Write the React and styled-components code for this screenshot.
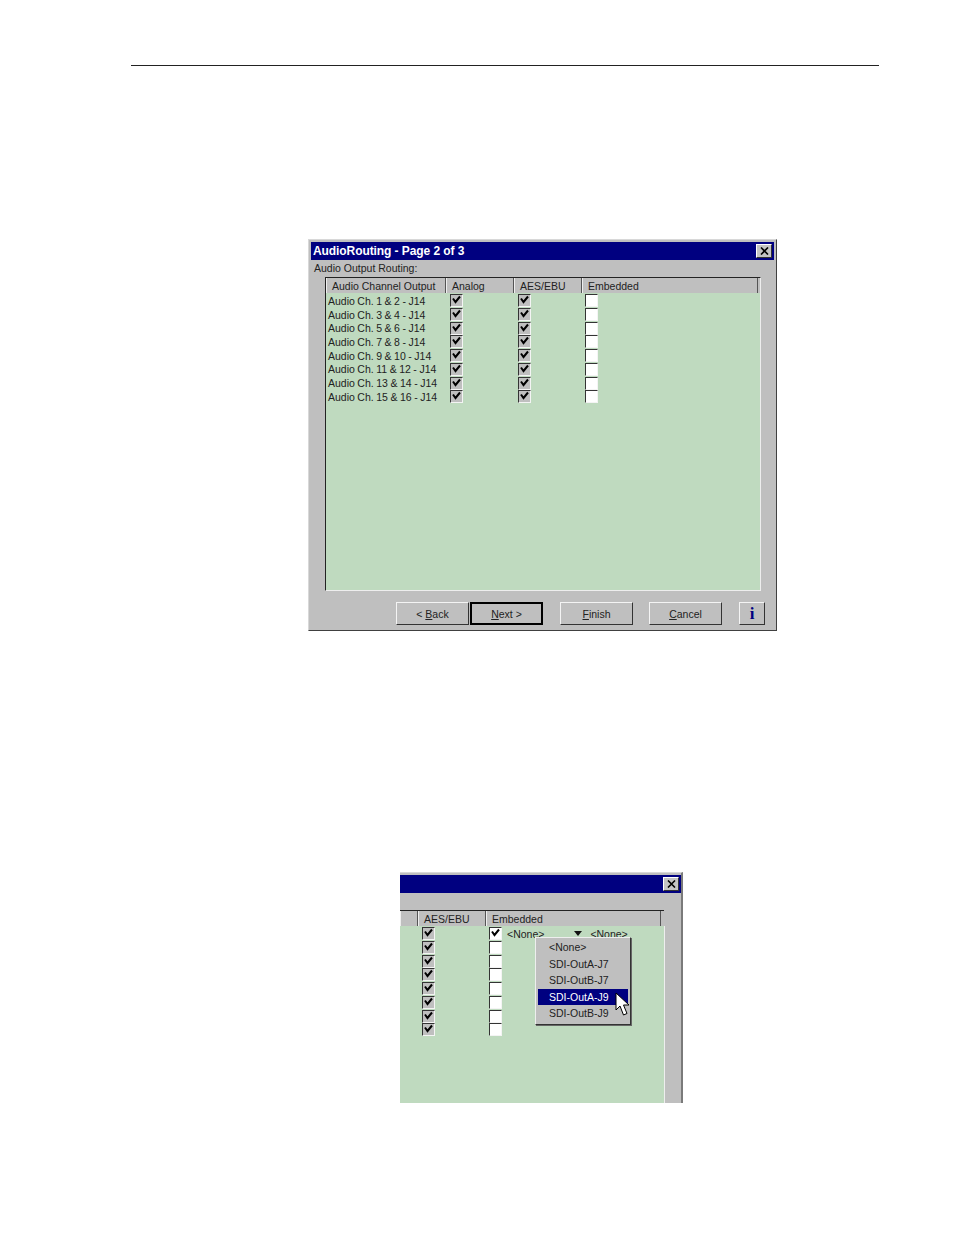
import React from 'react';
import styled, { createGlobalStyle } from 'styled-components';

const channels = [
  'Audio Ch. 1 & 2 - J14',
  'Audio Ch. 3 & 4 - J14',
  'Audio Ch. 5 & 6 - J14',
  'Audio Ch. 7 & 8 - J14',
  'Audio Ch. 9 & 10 - J14',
  'Audio Ch. 11 & 12 - J14',
  'Audio Ch. 13 & 14 - J14',
  'Audio Ch. 15 & 16 - J14',
];

const menuItems = ['<None>', 'SDI-OutA-J7', 'SDI-OutB-J7', 'SDI-OutA-J9', 'SDI-OutB-J9'];

const Check = ({ on, dim }) => (
  <CheckBox $dim={dim}>
    {on && (
      <svg width="11" height="11" viewBox="0 0 11 11">
        <path d="M2 3.5 L4.5 7 L9 1.5" fill="none" stroke="#000" strokeWidth="2" />
      </svg>
    )}
  </CheckBox>
);

const CloseButton = () => (
  <Close>
    <svg width="9" height="8" viewBox="0 0 9 8">
      <path d="M1 0.5 L8 7.5 M8 0.5 L1 7.5" stroke="#000" strokeWidth="1.6" />
    </svg>
  </Close>
);

const App = () => (
  <Page>
    <GlobalStyle />
    <Rule />

    <MainDialog>
      <TitleBar>
        <span>AudioRouting - Page 2 of 3</span>
        <CloseButton />
      </TitleBar>
      <Caption>Audio Output Routing:</Caption>
      <ListBox>
        <HeaderRow>
          <HeaderCell $w={120}>Audio Channel Output</HeaderCell>
          <HeaderCell $w={68}>Analog</HeaderCell>
          <HeaderCell $w={68}>AES/EBU</HeaderCell>
          <HeaderCell $w={176}>Embedded</HeaderCell>
        </HeaderRow>
        <Rows>
          {channels.map((name) => (
            <Row key={name}>
              <ChannelName>{name}</ChannelName>
              <CheckCell $w={68}><Check on dim /></CheckCell>
              <CheckCell $w={67}><Check on dim /></CheckCell>
              <CheckCell $w={68}><Check /></CheckCell>
            </Row>
          ))}
        </Rows>
      </ListBox>
      <ButtonBar>
        <Button><span>&lt; <u>B</u>ack</span></Button>
        <Button $primary $gap={1}><span><u>N</u>ext &gt;</span></Button>
        <Button $gap={17}><span><u>F</u>inish</span></Button>
        <Button $gap={16}><span><u>C</u>ancel</span></Button>
        <InfoButton $gap={17}>i</InfoButton>
      </ButtonBar>
    </MainDialog>

    <CropDialog>
      <CropTitle>
        <CloseButton />
      </CropTitle>
      <CropHeader>
        <HeaderCell $w={18} />
        <HeaderCell $w={68}>AES/EBU</HeaderCell>
        <HeaderCell $w={175}>Embedded</HeaderCell>
      </CropHeader>
      <CropList>
        {channels.map((name, i) => (
          <CropRow key={name}>
            <Check on dim />
            <CropSpacer />
            <Check on={i === 0} />
            {i === 0 && (
              <ComboText>
                <span>&lt;None&gt;</span>
                <Arrow />
                <span>&lt;None&gt;</span>
              </ComboText>
            )}
          </CropRow>
        ))}
        <Menu>
          {menuItems.map((item, i) => (
            <MenuItem key={item} $active={i === 3}>{item}</MenuItem>
          ))}
        </Menu>
        <Cursor width="16" height="25" viewBox="0 0 16 25">
          <path d="M1 1 L1 18 L5 14 L8.5 23 L12 21.5 L8.5 13 L14 13 Z" fill="#fff" stroke="#000" strokeWidth="1" />
        </Cursor>
      </CropList>
    </CropDialog>
  </Page>
);

const GlobalStyle = createGlobalStyle`
  html, body {
    margin: 0;
    background: #fff;
  }
`;

const Page = styled.div`
  width: 954px;
  height: 1235px;
  overflow: hidden;
  font-family: "Liberation Sans", Arial, sans-serif;
  font-size: 10.5px;
  color: #222;
`;

const Rule = styled.div`
  width: 748px;
  height: 1px;
  margin: 65px 0 0 131px;
  background: #222;
`;

const MainDialog = styled.div`
  box-sizing: border-box;
  width: 469px;
  height: 392px;
  margin: 173px 0 0 308px;
  padding: 2px;
  display: flex;
  flex-direction: column;
  background: #bfbfbf;
  border: 1px solid;
  border-color: #d8d8d8 #404040 #404040 #d8d8d8;
`;

const TitleBar = styled.div`
  height: 18px;
  padding: 0 2px;
  flex: none;
  display: flex;
  align-items: center;
  justify-content: space-between;
  background: #000080;
  color: #fff;
  font-size: 12px;
  font-weight: bold;
  letter-spacing: -0.08px;
`;

const Close = styled.div`
  box-sizing: border-box;
  width: 16px;
  height: 14px;
  display: flex;
  align-items: center;
  justify-content: center;
  background: #c4c4c4;
  border: 1px solid;
  border-color: #fff #333 #333 #fff;
`;

const Caption = styled.div`
  height: 17px;
  padding-left: 3px;
  line-height: 16px;
`;

const ListBox = styled.div`
  box-sizing: border-box;
  width: 436px;
  height: 314px;
  margin-left: 14px;
  flex: none;
  background: #bfdabf;
  border: 1px solid;
  border-color: #222 #eee #eee #222;
`;

const HeaderRow = styled.div`
  display: flex;
  height: 15px;
  background: #bfbfbf;
`;

const HeaderCell = styled.div`
  box-sizing: border-box;
  width: ${(p) => p.$w}px;
  height: 15px;
  padding: 1px 0 0 6px;
  line-height: 15px;
  border-right: 1px solid #555;
  box-shadow: inset 1px 0 0 #eee;
  white-space: nowrap;
  overflow: hidden;
`;

const Rows = styled.div`
  padding-top: 1px;
`;

const Row = styled.div`
  display: flex;
  align-items: center;
  height: 13.71px;
`;

const ChannelName = styled.div`
  width: 124px;
  padding-left: 2px;
  box-sizing: border-box;
  word-spacing: -0.4px;
  white-space: nowrap;
`;

const CheckCell = styled.div`
  width: ${(p) => p.$w}px;
`;

const CheckBox = styled.div`
  box-sizing: border-box;
  width: 13px;
  height: 13px;
  display: flex;
  align-items: center;
  justify-content: center;
  background: ${(p) => (p.$dim ? '#bfbfbf' : '#fff')};
  border: 1px solid;
  border-color: #333 #f4f4f4 #f4f4f4 #333;
  flex: none;
`;

const ButtonBar = styled.div`
  display: flex;
  padding: 11px 0 0 85px;
`;

const Button = styled.div`
  box-sizing: border-box;
  width: 73px;
  height: 23px;
  margin-left: ${(p) => p.$gap || 0}px;
  display: flex;
  align-items: center;
  justify-content: center;
  white-space: pre;
  background: #bfbfbf;
  border: ${(p) => (p.$primary ? '2px' : '1px')} solid;
  border-color: ${(p) => (p.$primary ? '#000' : '#f4f4f4 #333 #333 #f4f4f4')};
`;

const InfoButton = styled(Button)`
  width: 26px;
  color: #000080;
  font-family: "Liberation Serif", serif;
  font-size: 17px;
  font-weight: bold;
`;

const CropDialog = styled.div`
  position: relative;
  box-sizing: border-box;
  width: 283px;
  height: 231px;
  margin: 241px 0 0 400px;
  padding-top: 2px;
  overflow: hidden;
  background: #bfbfbf;
  border-top: 1px solid #d8d8d8;
  border-right: 2px solid #7a7a7a;
`;

const CropTitle = styled.div`
  height: 18px;
  width: 281px;
  padding-right: 2px;
  box-sizing: border-box;
  display: flex;
  align-items: center;
  justify-content: flex-end;
  background: #000080;
`;

const CropHeader = styled.div`
  display: flex;
  height: 16px;
  margin-top: 17px;
  border-top: 1px solid #222;
  width: 264px;
  box-sizing: border-box;
`;

const CropList = styled.div`
  position: relative;
  box-sizing: border-box;
  width: 265px;
  height: 177px;
  padding-top: 1px;
  background: #bfdabf;
  border-right: 1px solid #eee;
`;

const CropRow = styled.div`
  display: flex;
  align-items: center;
  height: 13.71px;
  padding-left: 22px;
`;

const CropSpacer = styled.div`
  width: 54px;
  flex: none;
`;

const ComboText = styled.div`
  display: flex;
  align-items: center;
  margin-left: 5px;
  white-space: nowrap;
`;

const Arrow = styled.div`
  width: 0;
  height: 0;
  margin: 0 8px 0 30px;
  border-left: 4px solid transparent;
  border-right: 4px solid transparent;
  border-top: 5px solid #111;
`;

const Menu = styled.div`
  position: absolute;
  left: 135px;
  top: 11px;
  box-sizing: border-box;
  width: 96px;
  height: 88px;
  padding: 1px 2px;
  background: #bfbfbf;
  border: 1px solid;
  border-color: #eee #333 #333 #eee;
  box-shadow: 1px 1px 0 #666;
`;

const MenuItem = styled.div`
  height: 16.6px;
  padding-left: 11px;
  line-height: 16.6px;
  background: ${(p) => (p.$active ? '#000080' : 'transparent')};
  color: ${(p) => (p.$active ? '#fff' : '#222')};
`;

const Cursor = styled.svg`
  position: absolute;
  left: 215px;
  top: 66px;
`;

export default App;
